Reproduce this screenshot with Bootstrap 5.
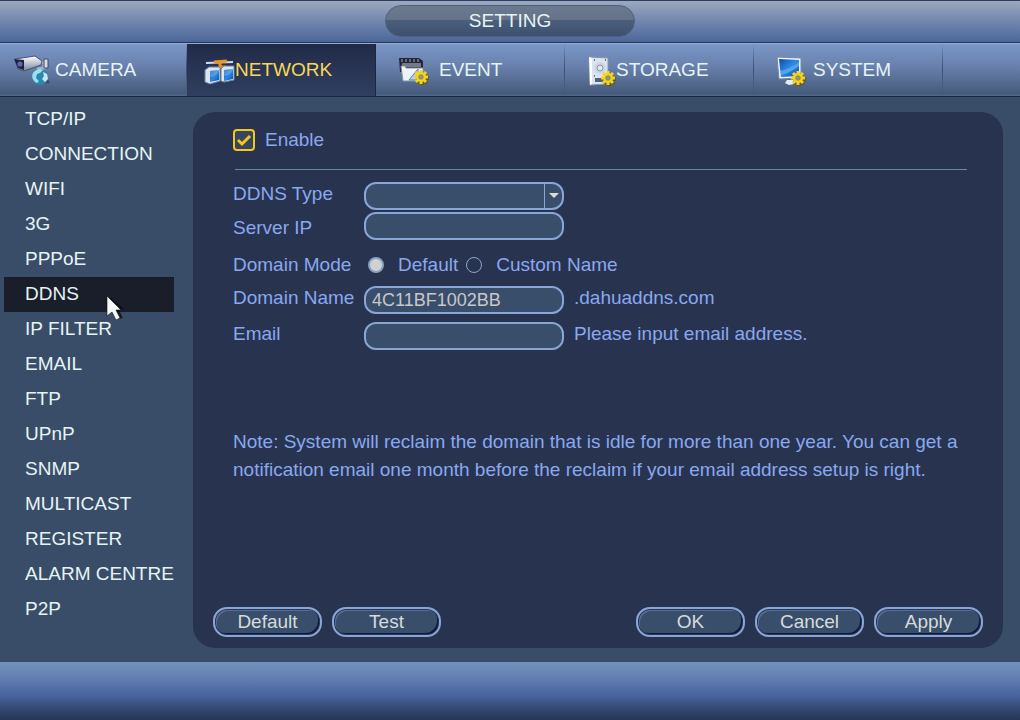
<!DOCTYPE html>
<html lang="en">
<head>
<meta charset="utf-8">
<meta name="viewport" content="width=device-width, initial-scale=1">
<title>Setting - Network - DDNS</title>
<link href="https://cdn.jsdelivr.net/npm/bootstrap@5.3.0/dist/css/bootstrap.min.css" rel="stylesheet">
<style>
:root { --line:#8aa6d6; --field:#394e6b; --panel:#28334f; --label:#8aa8f0; --ink:#e6f4f4; }
body { font:19px/24px "Liberation Sans", Arial, sans-serif; background:#394d69; color:var(--ink); }
.title-bar { height:43px; padding-top:4px; border-top:1px solid #2b3d63; border-bottom:1px solid #25365a; background:linear-gradient(#9ca8bd,#7186ae 50%,#4b6799); }
.title-pill { width:250px; height:32px; font-size:19px; line-height:29px; border-radius:16px; border:1px solid #50617f; background:linear-gradient(#6c7a90,#65728a 46%,#4b5f7c 47%,#3d506e); }
.main-tabs { height:54px; border-top:1px solid #93abd3; border-bottom:1px solid #1b2744; background:linear-gradient(#7b98c8,#677fab 45%,#465b7b 95%,#50678a); }
.main-tabs .nav-item { width:189px; flex:0 0 auto; }
.main-tabs .nav-item:first-child { width:187px; }
.main-tabs .nav-link { height:52px; padding:0 0 1px 23px; color:var(--ink); border-right:1px solid; border-image:linear-gradient(transparent,#3b4e72 50%,transparent) 1; }
.main-tabs .nav-link.first-tab { padding-left:15px; }
.main-tabs .nav-link.active { padding-left:18px; color:#f8d858; background:linear-gradient(#212b48,#303f60); border-image:none; border-color:#1a2646; }
.tab-icon { width:28px; height:32px; flex:none; overflow:visible; }
.tab-icon.wide { width:32px; }
.tab-icon.medium { width:30px; }
.side-nav { width:193px; padding:5px 19px 0 4px; }
.side-nav .nav-link { height:35px; line-height:33px; padding:0 0 0 21px; color:var(--ink); white-space:nowrap; }
.side-nav .nav-link.active { background:#191e2a; }
.pointer { left:102px; top:18px; z-index:2; }
.panel { background:var(--panel); border-radius:22px; margin:15px 17px 14px 0; padding:0 20px 11px; color:var(--label); }
.panel-form { padding:16px 16px 0 20px; }
.panel-form hr { margin:17px 0 12px 2px; border-color:#6b86ab; opacity:1; }
.form-line { display:grid; grid-template-columns:131px 200px auto; align-items:start; justify-content:start; margin-bottom:8px; }
.form-line label, .form-line .caption { white-space:nowrap; }
.type-line { margin-bottom:2px; }
.server-line { align-items:end; margin-bottom:13px; }
.mode-line { margin-bottom:9px; }
.tail { padding-left:10px; }
.radio-label { padding-left:14px; }
.form-control, .form-select { height:28px; padding:0 6px; font-size:18px; line-height:24px; color:#c8c8c8; background-color:var(--field); border:2px solid var(--line); border-radius:12px; }
.form-control:focus, .form-select:focus { background-color:var(--field); color:#c8c8c8; box-shadow:none; border-color:var(--line); }
.form-select { background-image:linear-gradient(var(--line),var(--line)),url("data:image/svg+xml,%3Csvg xmlns='http://www.w3.org/2000/svg' viewBox='0 0 10 5'%3E%3Cpath d='M0 0h10L5 5z' fill='%23d8dcd8'/%3E%3C/svg%3E"); background-repeat:no-repeat; background-size:1px 100%,10px 5px; background-position:right 17px top 0,right 3px top 9px; }
.form-check-input { border-color:var(--line); background-color:transparent; margin:0; flex:none; }
.form-check-input:focus { box-shadow:none; }
.form-check-input[type=checkbox] { width:22px; height:22px; border:2px solid #f4c81c; border-radius:4px; background-color:#3c4d62; }
.form-check-input[type=checkbox]:checked { border-color:#f4c81c; background-color:#344660; background-size:18px; background-image:url("data:image/svg+xml,%3Csvg xmlns='http://www.w3.org/2000/svg' viewBox='0 0 18 18'%3E%3Cpath d='M3 9l4 4 8-8' fill='none' stroke='%23f4c81c' stroke-width='3'/%3E%3C/svg%3E"); }
.form-check-input[type=radio] { width:16px; height:16px; }
.form-check-input[type=radio]:checked { background:#d0d2ce; border-width:2px; border-color:#8aa0c8; }
.enable-label { padding-left:10px; }
.note { margin:78px 0 0; line-height:28px; }
.button-row { gap:10px; }
.btn-pill { width:109px; height:30px; padding:0 0 1px; font-size:19px; line-height:24px; color:#d5dcda; background:var(--field); border:2px solid var(--line); border-radius:14px; box-shadow:inset 0 0 0 1px #28365a,inset -2px -2px 0 #101a38,inset 2px 2px 0 #586b90; }
.btn-pill:hover { color:#fff; background:var(--field); border-color:var(--line); }
.bottom-bar { height:58px; background:linear-gradient(#7391bb,#6783b5 22%,#47619b 60%,#354c76 78%,#243556); }
</style>
</head>
<body class="min-vh-100 d-flex flex-column">
<header>
  <div class="title-bar d-flex justify-content-center"><h1 class="title-pill text-center fw-normal m-0">SETTING</h1></div>
  <ul class="nav main-tabs flex-nowrap">
    <li class="nav-item"><a class="nav-link first-tab d-flex align-items-center" href="#">
      <svg class="tab-icon wide me-2" viewBox="0 0 32 32" aria-hidden="true"><defs><linearGradient id="metal" x2="0" y2="1"><stop stop-color="#fff"/><stop offset="1" stop-color="#77839c"/></linearGradient><linearGradient id="screen" x2="1" y2="1"><stop stop-color="#0d4dad"/><stop offset=".5" stop-color="#2b8be6"/><stop offset="1" stop-color="#0b50ae"/></linearGradient><g id="gear"><path d="M0-6V7M-6 0H7M-4-4L5 5M4-4L-5 5" stroke="#5f5a2c" stroke-width="4" transform="translate(1 1)"/><path d="M0-7V7M-7 0H7M-5-5L5 5M5-5L-5 5" stroke="#f5d51b" stroke-width="3"/><circle r="5" fill="#f5d51b"/><circle r="2.3" fill="#8795ab" stroke="#8f8126" stroke-width=".7"/></g></defs>
      <path d="M23 7l6 2v5l-7 1" fill="none" stroke="#a9b2c3" stroke-width="3"/><path d="M29 5h4v9h-4z" fill="#d7dce4" stroke="#424d64"/><path d="M0 5l20-3 7 5-1 4-17 6-6-2z" fill="url(#metal)" stroke="#485268"/><path d="M-1 5l10 1v10l-6-2z" fill="#202038"/><circle cx="5" cy="10" r="2.6" fill="#5866c1"/><path d="M26 30l9-1-4-8z" fill="#2a3a58" opacity=".6"/><circle cx="25" cy="23" r="8" fill="#2689b5"/><path d="M18 19c3-4 7-5 10-3l-3 3-3 1-1 4 3 3-2 2c-4-2-6-6-4-10z" fill="#9fdfec"/><path d="M28 18l4 2 1 5-3 3-3-3 2-3z" fill="#cde4eb"/></svg>CAMERA</a></li>
    <li class="nav-item"><a class="nav-link active d-flex align-items-center" aria-current="page" href="#">
      <svg class="tab-icon medium" viewBox="0 0 30 32" aria-hidden="true"><path d="M1 9l27-1" stroke="#d5dde9" stroke-width="2"/><path d="M9 8l13-1M15 8v5h5" stroke="#ed9421" stroke-width="3" fill="none"/><path d="M0 16l4-3h11v14l-10 3-5-2z" fill="#dce6f1" stroke="#70809e"/><path d="M16 15l3-3h10v14l-10 2-3-1z" fill="#dce6f1" stroke="#70809e"/><path d="M5 17l9-1v10l-9 2z" fill="url(#screen)"/><path d="M19 16l9-1v10l-9 2z" fill="url(#screen)"/><path d="M5 23c4 0 7-3 9-6v-1l-9 1zM19 22c4 0 7-3 9-6v-1l-9 1z" fill="#8fc3f3" opacity=".45"/></svg>NETWORK</a></li>
    <li class="nav-item"><a class="nav-link d-flex align-items-center" href="#"><svg class="tab-icon" viewBox="0 0 28 32" aria-hidden="true"><path d="M0 4h20l4 3v11H1z" fill="#22283a"/><path d="M3 5v3M7 5v3M11 5v3M15 5v3M19 5v3" stroke="#a3abb8"/><path d="M3 9h19v4H3z" fill="#737b88"/><path d="M2 12h4l1 2h17v13H4z" fill="#eef3f7" stroke="#8591a5"/><path d="M10 26l9-11v11z" fill="#b7d0e8" stroke="#5c83b0"/><use href="#gear" transform="translate(22 23)"/></svg><span class="ps-2 ms-1">EVENT</span></a></li>
    <li class="nav-item"><a class="nav-link d-flex align-items-center" href="#"><svg class="tab-icon" viewBox="0 0 28 32" aria-hidden="true"><path d="M1 3l19 1v26l-18 1z" fill="#dbe3ee" stroke="#8794aa"/><path d="M1 3l3 1v26l-2 1z" fill="#fff"/><circle cx="12" cy="14" r="6" fill="#ced7e4"/><circle cx="12" cy="14" r="3" fill="#dfe6ef" stroke="#8696ae"/><path d="M6 6h1M17 6h1M6 22h1" stroke="#67758d" stroke-width="2"/><path d="M7 24h8v4H7z" fill="#536079"/><use href="#gear" transform="translate(20 24)"/></svg>STORAGE</a></li>
    <li class="nav-item"><a class="nav-link d-flex align-items-center" href="#"><svg class="tab-icon me-2" viewBox="0 0 28 32" aria-hidden="true"><path d="M0 3l24 1v20l-22 1z" fill="#edf3fa" stroke="#7587a5"/><path d="M2 5l20 1v16l-18 1z" fill="url(#screen)"/><path d="M3 17q10-2 19-9v4q-9 7-18 9z" fill="#76b8ef" opacity=".6"/><path d="M10 26h9l3 3-10 2-4-2z" fill="#e5edf4"/><use href="#gear" transform="translate(21 24)"/></svg>SYSTEM</a></li>
  </ul>
</header>
<main class="d-flex flex-grow-1">
  <nav class="side-nav nav flex-column flex-nowrap flex-shrink-0" aria-label="Network settings">
    <a class="nav-link" href="#">TCP/IP</a><a class="nav-link" href="#">CONNECTION</a><a class="nav-link" href="#">WIFI</a><a class="nav-link" href="#">3G</a><a class="nav-link" href="#">PPPoE</a>
    <a class="nav-link active position-relative" aria-current="page" href="#">DDNS<svg class="pointer position-absolute" width="20" height="26" viewBox="0 0 20 26" aria-hidden="true"><path d="M4 2l14 12-5 1 4 8-4 1z" fill="#090b10" opacity=".75"/><path d="M1 1v20l5-4 4 8 4-2-4-8h5z" fill="#f4faf7" stroke="#111" stroke-width=".6"/></svg></a>
    <a class="nav-link" href="#">IP FILTER</a><a class="nav-link" href="#">EMAIL</a><a class="nav-link" href="#">FTP</a><a class="nav-link" href="#">UPnP</a><a class="nav-link" href="#">SNMP</a><a class="nav-link" href="#">MULTICAST</a><a class="nav-link" href="#">REGISTER</a><a class="nav-link" href="#">ALARM CENTRE</a><a class="nav-link" href="#">P2P</a>
  </nav>
  <form class="panel flex-grow-1 d-flex flex-column">
    <div class="panel-form">
      <div class="d-flex align-items-center"><input class="form-check-input" type="checkbox" id="enable" checked><label class="enable-label" for="enable">Enable</label></div>
      <hr>
      <div class="form-line type-line"><label for="type">DDNS Type</label><select class="form-select" id="type"><option></option></select></div>
      <div class="form-line server-line"><label for="server">Server IP</label><input class="form-control" id="server" type="text"></div>
      <div class="form-line mode-line" role="radiogroup" aria-labelledby="mode"><span class="caption" id="mode">Domain Mode</span><div class="d-flex align-items-center ps-1"><input class="form-check-input" type="radio" name="mode" id="std" checked><label class="radio-label" for="std">Default</label><input class="form-check-input ms-2" type="radio" name="mode" id="custom"><label class="radio-label" for="custom">Custom Name</label></div></div>
      <div class="form-line"><label for="domain">Domain Name</label><input class="form-control" id="domain" type="text" value="4C11BF1002BB"><span class="tail">.dahuaddns.com</span></div>
      <div class="form-line mb-0"><label for="email">Email</label><input class="form-control" id="email" type="email"><span class="tail">Please input email address.</span></div>
      <p class="note">Note: System will reclaim the domain that is idle for more than one year. You can get a notification email one month before the reclaim if your email address setup is right.</p>
    </div>
    <div class="button-row d-flex mt-auto"><button type="button" class="btn btn-pill">Default</button><button type="button" class="btn btn-pill">Test</button><button type="submit" class="btn btn-pill ms-auto">OK</button><button type="button" class="btn btn-pill">Cancel</button><button type="button" class="btn btn-pill">Apply</button></div>
  </form>
</main>
<footer class="bottom-bar"></footer>
<script src="https://cdn.jsdelivr.net/npm/bootstrap@5.3.0/dist/js/bootstrap.bundle.min.js"></script>
</body>
</html>
